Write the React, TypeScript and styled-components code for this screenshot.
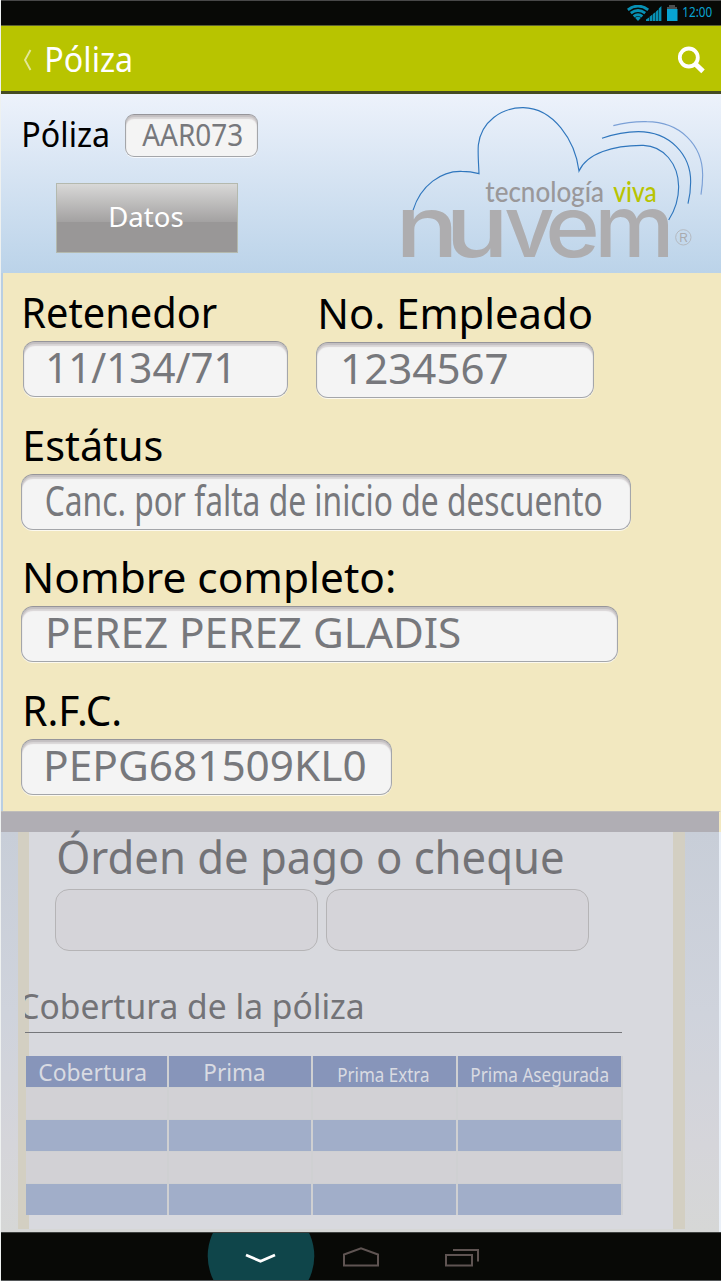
import React, { useLayoutEffect, useRef } from "react";
import styled, { createGlobalStyle } from "styled-components";

const FONT = '"Noto Sans", "Open Sans", sans-serif';

const GlobalStyle = createGlobalStyle`
  * { box-sizing: border-box; }
  body { margin: 0; background: #e9eff7; font-family: ${FONT}; }
`;

const Screen = styled.div`
  width: 721px;
  height: 1281px;
  overflow: hidden;
  border-left: 1px solid #eef1f0;
  display: flex;
  flex-direction: column;
`;

/* ---------- text fitted to a given ink width ---------- */

const FitBox = styled.span<{ $size: number; $width: number; $color: string }>`
  display: block;
  flex: none;
  width: ${(p) => p.$width}px;
  height: ${(p) => p.$size}px;
  font-size: ${(p) => p.$size}px;
  line-height: ${(p) => p.$size}px;
  color: ${(p) => p.$color};
  white-space: nowrap;
`;

const FitInner = styled.span`
  display: inline-block;
  transform-origin: 0 0;
`;

type FitProps = { size: number; width: number; color?: string; children: string; className?: string };

function FitText({ size, width, color = "#000", children, className }: FitProps) {
  const ref = useRef<HTMLSpanElement>(null);
  useLayoutEffect(() => {
    const ctx = document.createElement("canvas").getContext("2d");
    if (!ctx || !ref.current) return;
    ctx.font = `${size}px ${FONT}`;
    const m = ctx.measureText(children);
    const scale = (width - 1) / (m.actualBoundingBoxRight + m.actualBoundingBoxLeft);
    ref.current.style.transform = `translateX(${m.actualBoundingBoxLeft * scale + 0.2}px) scaleX(${scale})`;
  }, [size, width, children]);
  return (
    <FitBox $size={size} $width={width} $color={color} className={className}>
      <FitInner ref={ref}>{children}</FitInner>
    </FitBox>
  );
}

/* ---------- top bars ---------- */

const StatusBar = styled.div`
  flex: none;
  height: 26px;
  background: #080906;
  border-top: 1px solid #484848;
  border-bottom: 1px solid #5d6230;
  display: flex;
  justify-content: flex-end;
  align-items: flex-start;
  padding: 4px 8.5px 0 0;
`;

const StatusIcons = styled.svg`
  margin-right: 5px;
`;

const TitleBar = styled.header`
  flex: none;
  height: 68px;
  background: #b8c400;
  border-bottom: 3px solid #454b22;
  display: flex;
  align-items: center;
  padding: 0 16px 0 22px;
`;

const BackArrow = styled.svg`
  margin: 3px 15px 0 0;
`;

const SearchIcon = styled.svg`
  margin: 3px 0 0 auto;
`;

/* ---------- policy header ---------- */

const Hero = styled.section`
  flex: none;
  height: 179px;
  background: linear-gradient(#edf2fb, #bbd3e9);
  display: flex;
  justify-content: space-between;
  padding: 10px 13px 0 23px;
`;

const HeroLeft = styled.div`
  padding-top: 10px;
`;

const PolicyRow = styled.div`
  display: flex;
  align-items: flex-start;
  gap: 16px;
  & > :first-child { margin-top: 3px; }
`;

const Field = styled.div<{ $w: number; $h?: number; $pad: number; $top?: number }>`
  width: ${(p) => p.$w}px;
  height: ${(p) => p.$h ?? 56}px;
  padding: ${(p) => p.$top ?? 5}px 0 0 ${(p) => p.$pad}px;
  border: 1px solid #a4a6aa;
  border-top-color: #96959a;
  border-radius: ${(p) => (p.$h ? 9 : 12)}px;
  background: #f4f4f4;
  box-shadow: 0 1px 0 rgba(255, 255, 255, 0.75), inset 0 2px 1px #c3bfc1, inset 0 4px 1px #dad6d7;
`;

const DataButton = styled.button`
  display: flex;
  width: 182px;
  height: 70px;
  margin: 26px 0 0 32px;
  padding: 18px 0 0 53px;
  border: 1px solid #b4b9ae;
  background: linear-gradient(#d8d8d7 0%, #a3a1a1 56%, #999797 56%, #999797 100%);
  font-family: ${FONT};
  text-align: left;
`;

/* ---------- form ---------- */

const Form = styled.section`
  flex: none;
  height: 538px;
  border-left: 2px solid #b9cee2;
  background: #f2e8c0;
  padding: 19px 0 0 18px;
  display: flex;
  flex-direction: column;
  gap: 27.6px;
`;

const Pair = styled.div`
  display: flex;
  gap: 28px;
  padding-left: 2px;
  margin-bottom: -0.7px;
`;

const Group = styled.div<{ $shift?: number; $indent?: number }>`
  display: flex;
  flex-direction: column;
  gap: 8px;
  padding-top: ${(p) => p.$shift ?? 0}px;
  & > :first-child { margin-left: ${(p) => p.$indent ?? 4}px; }
`;

/* ---------- dimmed section ---------- */

const Divider = styled.div`
  flex: none;
  height: 21px;
  background: #b0aeb4;
  border-top: 1px solid #bfbdba;
  border-right: 2px solid #f2e8c0;
`;

const Dimmed = styled.section`
  flex: none;
  height: 400px;
  width: 718px;
  padding: 0 34px 3px 16.5px;
  background: linear-gradient(#c8ced8, #cfd3dc 45%, #d5d5da 78%, #d6d7d6);
  display: flex;
`;

const Sheet = styled.div`
  flex: 1;
  border: solid #d3cfc2;
  border-width: 0 12px 0 11.5px;
  background: #d8d9de;
  padding-top: 2px;
  display: flex;
  flex-direction: column;
`;

const OrderTitle = styled.div`
  padding-left: 29px;
`;

const OrderFields = styled.div`
  display: flex;
  gap: 8px;
  margin: 10px 0 0 26px;
`;

const EmptyField = styled.div`
  width: 263px;
  height: 62px;
  border: 1px solid #b5b4b6;
  border-radius: 14px;
  background: #d5d4d9;
`;

const CoverageTitle = styled.div`
  width: 597px;
  height: 45px;
  margin: 37px 0 23px -4px;
  border-bottom: 1px solid #75767a;
  overflow: hidden;
  & > * { margin-left: -5px; }
`;

const Table = styled.div`
  display: grid;
  grid-template-columns: 141px 142.5px 142.5px 163px;
  grid-template-rows: repeat(5, 31px);
  gap: 1px 2px;
  width: 597px;
  margin-left: -3px;
  padding-right: 2px;
  background: linear-gradient(#cfd0d2, #cfd0d2) no-repeat 0 0 / 597px 160px;
`;

const HeadCell = styled.div<{ $small?: boolean; $pad: number }>`
  background: #8795ba;
  padding: ${(p) => (p.$small ? 9 : 4)}px 0 0 ${(p) => p.$pad}px;
`;

const Cell = styled.div<{ $blue: boolean }>`
  background: ${(p) => (p.$blue ? "#a1aec9" : "#d2d1d5")};
`;

/* ---------- navigation ---------- */

const NavBar = styled.nav`
  flex: none;
  height: 49px;
  background: #080906;
  border-top: 1px solid #3f4240;
  border-bottom: 1px solid #55585a;
`;

const WORDMARK = [
  { char: "n", x: 46, stretch: 1.24 },
  { char: "u", x: 196, stretch: 1.24 },
  { char: "v", x: 373, stretch: 1.03 },
  { char: "e", x: 496, stretch: 1.09 },
  { char: "m", x: 643, stretch: 1.06 },
];

function Logo() {
  return (
    <svg width="308" height="158" viewBox="60 42 924 474">
      <g fill="none" stroke="#2f76bd" strokeWidth="3.4">
        <path d="M99 361C122 285 185 242 245 244C265 244 282 247 297 251C296 225 293 190 295 165C303 95 365 52 430 53C520 55 585 150 597 243C620 190 700 165 790 166C850 168 895 220 896 290C896 325 885 360 866 390" />
        <path d="M666 145C700 133 740 125 775 125C870 125 932 195 932 275C932 300 929 320 924 341" />
        <path d="M700 107C735 98 765 94 800 95C900 95 968 165 968 255C968 275 966 295 963 314" stroke="#7ba0d6" />
      </g>
      <g fontFamily="Lato, sans-serif" fontSize="86" fontWeight="500">
        <text x="316" y="335" textLength="356" lengthAdjust="spacingAndGlyphs" fill="#9a989a">tecnología</text>
        <text x="700" y="335" textLength="130" lengthAdjust="spacingAndGlyphs" fill="#b8c400">viva</text>
      </g>
      <g fontFamily="Inter, sans-serif" fontSize="256" fontWeight="450" fill="#aeadaf">
        {WORDMARK.map((l) => (
          <text key={l.char} transform={`translate(${l.x} 502) scale(${l.stretch} 1)`}>{l.char}</text>
        ))}
      </g>
      <circle cx="910" cy="442" r="23" fill="none" stroke="#b0b1b5" strokeWidth="2.4" />
      <text x="898" y="455" fontFamily="Liberation Sans, sans-serif" fontSize="36" fill="#a9aaae" textLength="25">R</text>
    </svg>
  );
}

function StatusGlyphs() {
  return (
    <StatusIcons width="51" height="17" viewBox="0 0 51 17">
      <g fill="none" stroke="#0790b4" strokeWidth="2.8">
        <path d="M.8 4.8Q11 -2.6 21.2 4.8" />
        <path d="M3.8 8.2Q11 2.8 18.2 8.2" />
        <path d="M6.6 11.4Q11 8 15.4 11.4" />
      </g>
      <path d="M8 12.8Q11 10.8 14 12.8L11 16Z" fill="#0790b4" />
      <path d="M19 16V14.6L22 12.4V16ZM22.6 16V11.8L25.4 9.6V16ZM25.9 16V9L28.5 7V16ZM29 16V6.4L31.3 4.4V16ZM31.8 16V3.6L34.4 1V16Z" fill="#0790b4" />
      <rect x="42" y="0" width="6" height="3" fill="#4b4f50" />
      <rect x="40" y="2" width="10" height="2" fill="#4b4f50" />
      <rect x="40" y="4" width="10.5" height="12" fill="#08a4d2" />
    </StatusIcons>
  );
}

const HEADERS = [
  { text: "Cobertura", size: 24, width: 107.5, pad: 13.5 },
  { text: "Prima", size: 24, width: 60, pad: 36.5 },
  { text: "Prima Extra", size: 19.5, width: 91.5, pad: 25 },
  { text: "Prima Asegurada", size: 19.5, width: 138, pad: 13.5 },
];

export default function App() {
  const gray = "#77787c";
  return (
    <Screen>
      <GlobalStyle />
      <StatusBar>
        <StatusGlyphs />
        <FitText size={14} width={30} color="#08a4d2">12:00</FitText>
      </StatusBar>
      <TitleBar>
        <BackArrow width="9" height="22" viewBox="0 0 9 22">
          <path d="M7.5 1L2 11L7.5 21" fill="none" stroke="#e3e797" strokeWidth="1.9" />
        </BackArrow>
        <FitText size={34} width={85} color="#fff">Póliza</FitText>
        <SearchIcon width="27" height="28" viewBox="0 0 27 28">
          <circle cx="10.8" cy="11.5" r="9" fill="none" stroke="#fff" strokeWidth="3.8" />
          <path d="M16.6 17.2L25 25.4" stroke="#fff" strokeWidth="5" />
        </SearchIcon>
      </TitleBar>

      <Hero>
        <HeroLeft>
          <PolicyRow>
            <FitText size={34} width={85}>Póliza</FitText>
            <Field $w={133} $h={43} $pad={16} $top={4.5}>
              <FitText size={30} width={101} color={gray}>AAR073</FitText>
            </Field>
          </PolicyRow>
          <DataButton>
            <FitText size={28} width={74} color="#fff">Datos</FitText>
          </DataButton>
        </HeroLeft>
        <Logo />
      </Hero>

      <Form>
        <Pair>
          <Group $indent={1}>
            <FitText size={41} width={194}>Retenedor</FitText>
            <Field $w={265} $pad={24}>
              <FitText size={41} width={181} color={gray}>11/134/71</FitText>
            </Field>
          </Group>
          <Group $shift={0.7} $indent={4}>
            <FitText size={41} width={272}>No. Empleado</FitText>
            <Field $w={278} $pad={26}>
              <FitText size={41} width={165} color={gray}>1234567</FitText>
            </Field>
          </Group>
        </Pair>
        <Group>
          <FitText size={41} width={137.5}>Estátus</FitText>
          <Field $w={610} $pad={23.5}>
            <FitText size={41} width={556} color={gray}>Canc. por falta de inicio de descuento</FitText>
          </Field>
        </Group>
        <Group>
          <FitText size={41} width={370}>Nombre completo:</FitText>
          <Field $w={597} $pad={25.5}>
            <FitText size={41} width={412.5} color={gray}>PEREZ PEREZ GLADIS</FitText>
          </Field>
        </Group>
        <Group>
          <FitText size={41} width={96}>R.F.C.</FitText>
          <Field $w={371} $pad={24}>
            <FitText size={41} width={320} color={gray}>PEPG681509KL0</FitText>
          </Field>
        </Group>
      </Form>

      <Divider />
      <Dimmed>
        <Sheet>
          <OrderTitle>
            <FitText size={45} width={506} color="#737377">Órden de pago o cheque</FitText>
          </OrderTitle>
          <OrderFields>
            <EmptyField />
            <EmptyField />
          </OrderFields>
          <CoverageTitle>
            <FitText size={35} width={343} color="#737377">Cobertura de la póliza</FitText>
          </CoverageTitle>
          <Table>
            {HEADERS.map((h) => (
              <HeadCell key={h.text} $pad={h.pad} $small={h.size < 24}>
                <FitText size={h.size} width={h.width} color="#d9dbe2">{h.text}</FitText>
              </HeadCell>
            ))}
            {Array.from({ length: 16 }, (_, i) => (
              <Cell key={i} $blue={Math.floor(i / 4) % 2 === 1} />
            ))}
          </Table>
        </Sheet>
      </Dimmed>

      <NavBar>
        <svg width="720" height="47" viewBox="1 1233 720 47">
          <circle cx="261" cy="1256" r="53.3" fill="#0f454a" />
          <path d="M246 1255L260.5 1261.3L275 1255" fill="none" stroke="#fff" strokeWidth="2.8" />
          <g fill="none" stroke="#5f5452" strokeWidth="2">
            <path d="M344 1265.5V1254.5L361 1248.3L378 1254.5V1265.5Z" />
            <path d="M446 1255H472V1265.5H446ZM453 1250H478V1261.5" />
          </g>
        </svg>
      </NavBar>
    </Screen>
  );
}
